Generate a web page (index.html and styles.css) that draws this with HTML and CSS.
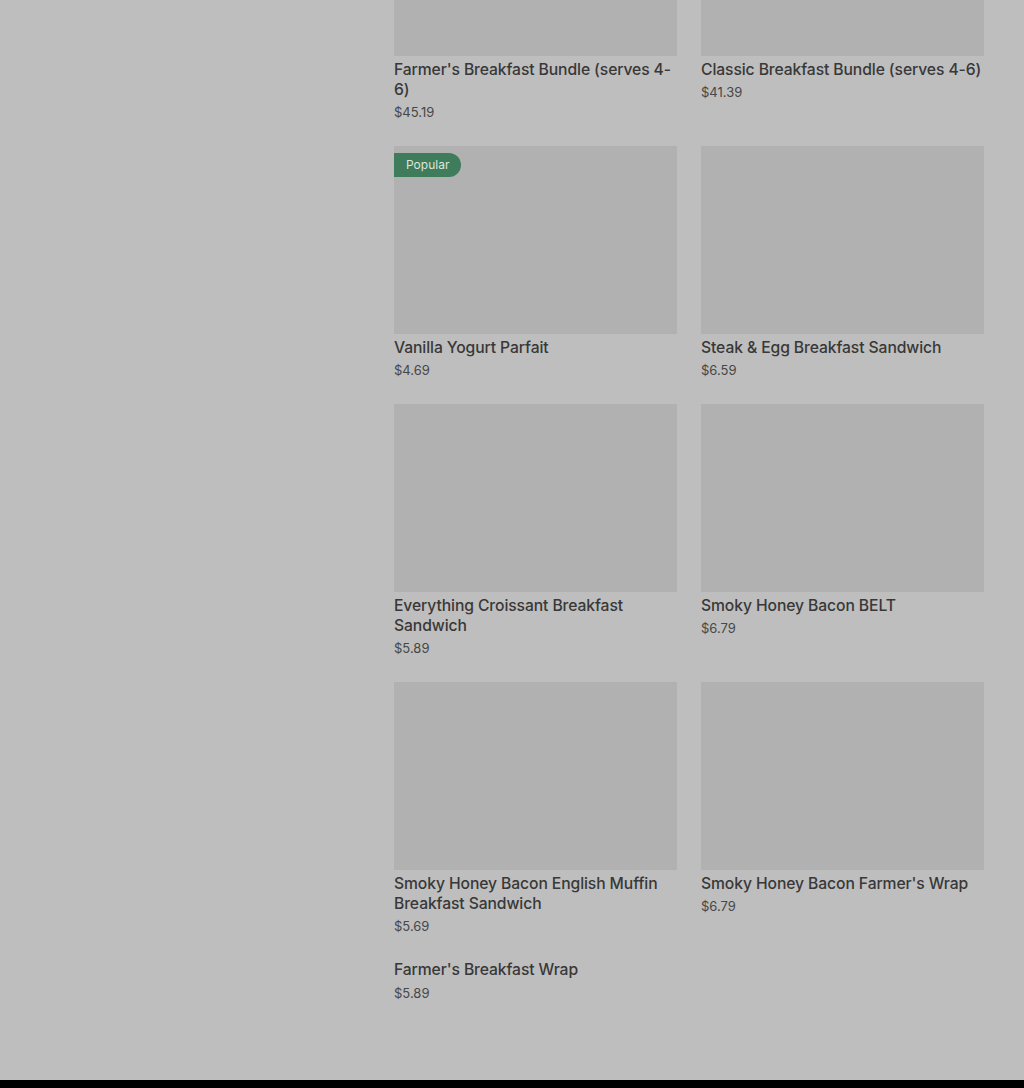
FILE: index.html
```html
<!DOCTYPE html>
<html lang="en">
<head>
	<meta charset="utf-8">
	<meta name="viewport" content="width=device-width, initial-scale=1.0">
	<title>Breakfast menu</title>
	<link rel="stylesheet" href="styles.css">
</head>
<body>
	<div class="page">
		<aside class="side"></aside>
		<main class="menu">
			<ul class="grid">
				<li class="item">
					<div class="pic"></div>
					<h3 class="name">Farmer's Breakfast Bundle (serves 4-6)</h3>
					<p class="price">$45.19</p>
				</li>
				<li class="item">
					<div class="pic"></div>
					<h3 class="name">Classic Breakfast Bundle (serves 4-6)</h3>
					<p class="price">$41.39</p>
				</li>
				<li class="item">
					<div class="pic"><span class="badge">Popular</span></div>
					<h3 class="name">Vanilla Yogurt Parfait</h3>
					<p class="price">$4.69</p>
				</li>
				<li class="item">
					<div class="pic"></div>
					<h3 class="name">Steak &amp; Egg Breakfast Sandwich</h3>
					<p class="price">$6.59</p>
				</li>
				<li class="item">
					<div class="pic"></div>
					<h3 class="name">Everything Croissant Breakfast Sandwich</h3>
					<p class="price">$5.89</p>
				</li>
				<li class="item">
					<div class="pic"></div>
					<h3 class="name">Smoky Honey Bacon BELT</h3>
					<p class="price">$6.79</p>
				</li>
				<li class="item">
					<div class="pic"></div>
					<h3 class="name">Smoky Honey Bacon English Muffin Breakfast Sandwich</h3>
					<p class="price">$5.69</p>
				</li>
				<li class="item">
					<div class="pic"></div>
					<h3 class="name">Smoky Honey Bacon Farmer's Wrap</h3>
					<p class="price">$6.79</p>
				</li>
				<li class="item no-pic">
					<h3 class="name">Farmer's Breakfast Wrap</h3>
					<p class="price">$5.89</p>
				</li>
			</ul>
		</main>
	</div>
	<footer class="foot"></footer>
</body>
</html>
```

FILE: styles.css
```css
body, div, ul, li, h3, p{
	margin: 0;
	padding: 0;
}
ul{
	list-style: none;
}
body{
	background: #bebebe;
	color: #3a3a3a;
	font-family: "Inter", "Liberation Sans", sans-serif;
}
.page{
	display: flex;
	padding: 0 40px 0 394px;
}
.menu{
	flex: 1;
	margin-top: -132px;
	padding-bottom: 77px;
}
.grid{
	display: grid;
	grid-template-columns: 283px 283px;
	column-gap: 24px;
	row-gap: 24px;
}
.pic{
	position: relative;
	height: 188px;
	background: #b1b1b1;
}
.badge{
	position: absolute;
	top: 7px;
	left: 0;
	height: 24px;
	padding: 0 12px;
	border-radius: 0 12px 12px 0;
	background: #3e7c5b;
	color: #dce6df;
	font-size: 12px;
	line-height: 24px;
}
.name{
	margin-top: 4px;
	font-size: 15.7px;
	font-weight: 500;
	letter-spacing: -0.1px;
	line-height: 20px;
	color: #383838;
}
.price{
	margin-top: 2px;
	font-size: 13px;
	line-height: 20px;
	color: #474747;
}
.no-pic .name{
	margin-top: 0;
}
.no-pic .price{
	margin-top: 3px;
}
.foot{
	height: 8px;
	background: #000;
}
```
